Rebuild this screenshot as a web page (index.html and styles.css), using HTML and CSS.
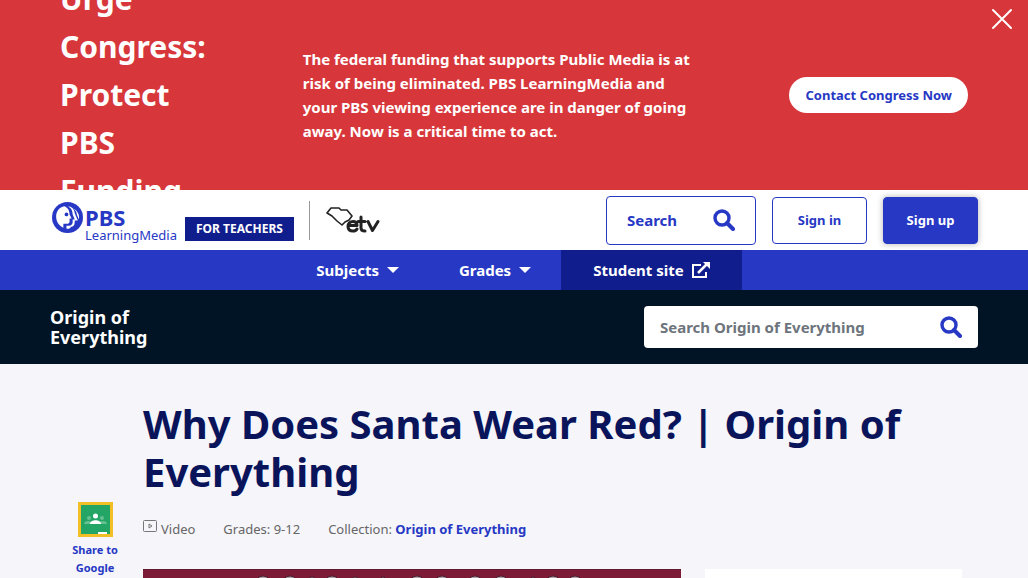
FILE: index.html
```html
<!DOCTYPE html>
<html lang="en">
<head>
    <meta charset="UTF-8">
    <meta name="viewport" content="width=device-width, initial-scale=1.0">
    <title>Why Does Santa Wear Red? | Origin of Everything | PBS LearningMedia</title>
    <link rel="stylesheet" href="styles.css">
</head>
<body>
    <section class="banner">
        <h2 class="banner-title">Urge Congress: Protect PBS Funding</h2>
        <p class="banner-text">The federal funding that supports Public Media is at risk of being eliminated. PBS LearningMedia and your PBS viewing experience are in danger of going away. Now is a critical time to act.</p>
        <a href="#" class="banner-link">Contact Congress Now</a>
        <button type="button" class="banner-close" aria-label="Close">
            <svg width="22" height="22" viewBox="0 0 22 22"><path d="M2 2L20 20M20 2L2 20" stroke="#fff" stroke-width="2" stroke-linecap="round"/></svg>
        </button>
    </section>

    <header class="header">
        <a href="#" class="logo">
            <svg class="logo-mark" viewBox="0 0 30 30">
                <circle cx="15" cy="15" r="15" fill="#2638c4"/>
                <path d="M12 4C7 5 4 9 4 14c0 3 1 6 3 8 1 1 2 2 4 3v-4h3c2 0 3-1 3-2v-3h2l-2-4c0-4-2-7-5-8z" fill="#fff"/>
                <path d="M15 4c3 1 5 4 5 8l2 5h-2v2c0 2-1 4-4 4h-2v3c2 0 3 0 4-1v-1c3 0 4-2 4-5v-1h3l-3-7c0-4-3-7-7-7z" fill="#fff"/>
                <path d="M20 6c3 2 4 4 4 6l2 5c1-4-1-9-6-11z" fill="#fff"/>
                <circle cx="14" cy="12" r="1.800" fill="#2638c4"/>
            </svg>
            <span class="logo-text">
                <strong>PBS</strong>
                <span>LearningMedia</span>
            </span>
        </a>
        <span class="teachers">FOR TEACHERS</span>
        <a href="#" class="station" aria-label="etv">
            <svg width="54" height="26" viewBox="0 0 54 26" fill="none" stroke="#222" stroke-linecap="round" stroke-linejoin="round">
                <path d="M16 18L11 14 6 9 1 6 5 1h8l2 2h6l5 6-3 4-4 2z" stroke-width="1.6"/>
                <path d="M23 18.500h8c0-3-2-4-4-4-3 0-5 2-5 5s2 4.500 5 4.500c2 0 3 0 4-2M35 10v11c0 2 1 3 4 3M32 14.500h7M42 14.500l4.500 9 5.500-9" stroke-width="3"/>
            </svg>
        </a>
        <div class="header-actions">
            <button type="button" class="search-btn">Search
                <svg class="icon-search" viewBox="0 0 22 22"><circle cx="9" cy="9" r="7" fill="none" stroke="#2638c4" stroke-width="3.4"/><path d="M14 14l6 6" stroke="#2638c4" stroke-width="4" stroke-linecap="round"/></svg>
            </button>
            <button type="button" class="btn">Sign in</button>
            <button type="button" class="btn btn-primary">Sign up</button>
        </div>
    </header>

    <nav class="nav">
        <button type="button" class="nav-item">Subjects <span class="caret"></span></button>
        <button type="button" class="nav-item">Grades <span class="caret"></span></button>
        <a href="#" class="nav-item nav-student">Student site
            <svg width="18" height="17" viewBox="0 0 18 17" fill="none" stroke="#fff" stroke-width="2"><path d="M9 3H1v12h13v-5"/><path d="M6 11l9-9" stroke-width="2.5"/><path d="M11 0h7v7z" fill="#fff" stroke="none"/></svg>
        </a>
    </nav>

    <div class="collection">
        <a href="#" class="collection-name">Origin of Everything</a>
        <form class="collection-search">
            <input type="text" placeholder="Search Origin of Everything" aria-label="Search Origin of Everything">
            <button type="submit" aria-label="Search">
                <svg class="icon-search" viewBox="0 0 22 22"><circle cx="9" cy="9" r="7" fill="none" stroke="#2638c4" stroke-width="3.4"/><path d="M14 14l6 6" stroke="#2638c4" stroke-width="4" stroke-linecap="round"/></svg>
            </button>
        </form>
    </div>

    <main class="main">
        <aside class="share">
            <button type="button" class="share-btn">
                <svg width="35" height="35" viewBox="0 0 35 35">
                    <path d="M0 0h35v35H0z" fill="#f2bf25"/>
                    <path d="M3 3h29v29H3z" fill="#23a566"/>
                    <path d="M20 30h9v2h-9z" fill="#fff"/>
                    <g fill="#66c092"><circle cx="11" cy="16" r="2"/><circle cx="24" cy="16" r="2"/><path d="M6 22c0-4 8-4 9 0zM20 22c1-4 9-4 9 0z"/></g>
                    <circle cx="17.5" cy="14" r="2.5" fill="#fff"/>
                    <path d="M12 22c0-5 11-5 11 0z" fill="#fff"/>
                </svg>
                <span>Share to Google</span>
            </button>
        </aside>
        <article class="resource">
            <h1>Why Does Santa Wear Red? | Origin of Everything</h1>
            <div class="meta">
                <span class="meta-type">
                    <svg width="14" height="12" viewBox="0 0 14 12" fill="none" stroke="#777"><rect x=".5" y=".5" width="13" height="11" rx="1"/><path d="M6 4l3 2-3 2z"/></svg>
                    Video
                </span>
                <span>Grades: 9-12</span>
                <span>Collection: <a href="#">Origin of Everything</a></span>
            </div>
            <div class="content">
                <div class="video">
                    <svg viewBox="0 0 538 303" preserveAspectRatio="xMidYMin slice">
                        <path d="M0 0h538v303H0z" fill="#7d1a35"/>
                        <path d="M0 .5h538" stroke="#5f1a30"/>
                        <g fill="#aaa3a8" stroke="#4a1a2a">
                            <circle cx="120" cy="15" r="8"/><circle cx="147" cy="15" r="8"/><circle cx="169" cy="13" r="5"/><circle cx="189" cy="15" r="8"/><circle cx="212" cy="13" r="5"/><circle cx="240" cy="11" r="3"/><circle cx="274" cy="15" r="8"/><circle cx="299" cy="15" r="8"/><circle cx="332" cy="15" r="8"/><circle cx="358" cy="15" r="8"/><circle cx="390" cy="11" r="3"/><circle cx="410" cy="15" r="8"/><circle cx="432" cy="15" r="8"/>
                        </g>
                    </svg>
                </div>
                <div class="sidebar"></div>
            </div>
        </article>
    </main>
</body>
</html>
```

FILE: styles.css
```css
* {
    margin: 0;
    padding: 0;
    box-sizing: border-box;
}

body {
    display: flex;
    flex-direction: column;
    height: 100vh;
    overflow: hidden;
    font-family: "Noto Sans", "Open Sans", sans-serif;
    font-size: 15px;
    background: #f5f5fa;
    color: #2638c4;
}

button,
input {
    font: inherit;
    color: inherit;
    border: none;
    background: none;
}

button {
    cursor: pointer;
}

a {
    color: inherit;
    text-decoration: none;
}

svg {
    display: block;
    flex: none;
}

.banner {
    position: relative;
    display: flex;
    flex: none;
    align-items: center;
    justify-content: space-between;
    height: 190px;
    padding: 0 60px;
    overflow: hidden;
    background: #d7373b;
    color: #fff;
}

.banner-title {
    width: 144px;
    font-size: 30px;
    line-height: 48px;
}

.banner-text {
    width: 388px;
    font-weight: bold;
    line-height: 24px;
}

.banner-link {
    padding: 8px 16px;
    border-radius: 20px;
    background: #fff;
    color: #2638c4;
    font-size: 13px;
    font-weight: bold;
    line-height: 20px;
}

.banner-close {
    position: absolute;
    top: 8px;
    right: 15px;
}

.header {
    display: flex;
    flex: none;
    align-items: center;
    height: 60px;
    padding: 0 50px;
    background: #fff;
}

.logo {
    display: flex;
    margin-left: 2px;
}

.logo-mark {
    width: 31px;
    height: 31px;
    margin-top: 3px;
}

.logo-text {
    display: flex;
    flex-direction: column;
    margin-left: 2px;
    padding-top: 6px;
    font-size: 13px;
    line-height: 12px;
}

.logo-text strong {
    font-size: 22px;
    line-height: 24px;
}

.teachers {
    margin: 18px 15px 0 8px;
    padding: 0 11px;
    background: #0f1e8c;
    color: #fff;
    font-size: 12px;
    font-weight: bold;
    line-height: 24px;
}

.station {
    display: flex;
    align-items: center;
    height: 39px;
    padding-left: 16px;
    border-left: 1px solid #999;
}

.header-actions {
    display: flex;
    align-items: center;
    gap: 16px;
    margin-left: auto;
}

.search-btn,
.btn {
    border: 1px solid #2638c4;
    border-radius: 4px;
    background: #fff;
    font-weight: bold;
}

.search-btn {
    display: flex;
    align-items: center;
    justify-content: space-between;
    width: 150px;
    height: 49px;
    padding: 0 20px;
}

.icon-search {
    width: 22px;
    height: 22px;
}

.btn {
    width: 95px;
    height: 47px;
    font-size: 13px;
}

.btn-primary {
    background: #2638c4;
    color: #fff;
    box-shadow: 0 0 6px rgba(0, 0, 0, 0.3);
}

.nav {
    display: flex;
    flex: none;
    justify-content: center;
    height: 40px;
    background: #2638c4;
    color: #fff;
}

.nav-item {
    display: flex;
    align-items: center;
    gap: 8px;
    padding: 0 30px;
    font-weight: bold;
}

.nav-student {
    padding: 0 32px;
    background: #0f1e8c;
}

.caret {
    border: 6px solid transparent;
    border-top-color: #fff;
    border-bottom: none;
}

.collection {
    display: flex;
    flex: none;
    align-items: center;
    justify-content: space-between;
    height: 74px;
    padding: 0 50px;
    background: #001426;
}

.collection-name {
    width: 120px;
    color: #fff;
    font-size: 18px;
    font-weight: bold;
    line-height: 20px;
}

.collection-search {
    display: flex;
    align-items: center;
    width: 36%;
    height: 42px;
    padding: 0 16px;
    border-radius: 4px;
    background: #fff;
}

.collection-search input {
    flex: 1;
    min-width: 0;
    font-weight: bold;
    outline: none;
}

.collection-search input::placeholder {
    color: #6d747c;
}

.main {
    display: flex;
    flex: 1;
    gap: 18px;
    min-height: 0;
    padding: 36px 66px 0 65px;
    overflow: hidden;
}

.share {
    width: 60px;
    padding-top: 102px;
}

.share-btn {
    display: flex;
    flex-direction: column;
    align-items: center;
    gap: 4px;
    width: 100%;
    font-size: 11px;
    font-weight: bold;
    line-height: 18px;
}

.resource {
    flex: 1;
}

.resource h1 {
    color: #0a145a;
    font-size: 40px;
    line-height: 48px;
}

.meta {
    display: flex;
    gap: 28px;
    margin: 24px 0 30px;
    color: #666;
    font-size: 13px;
    line-height: 19px;
}

.meta-type {
    display: flex;
    gap: 4px;
}

.meta a {
    color: #2638c4;
    font-weight: bold;
}

.content {
    display: flex;
    gap: 24px;
}

.video {
    flex: 1;
}

.video svg {
    width: 100%;
    aspect-ratio: 16 / 9;
}

.sidebar {
    width: 257px;
    background: #fff;
}
```
